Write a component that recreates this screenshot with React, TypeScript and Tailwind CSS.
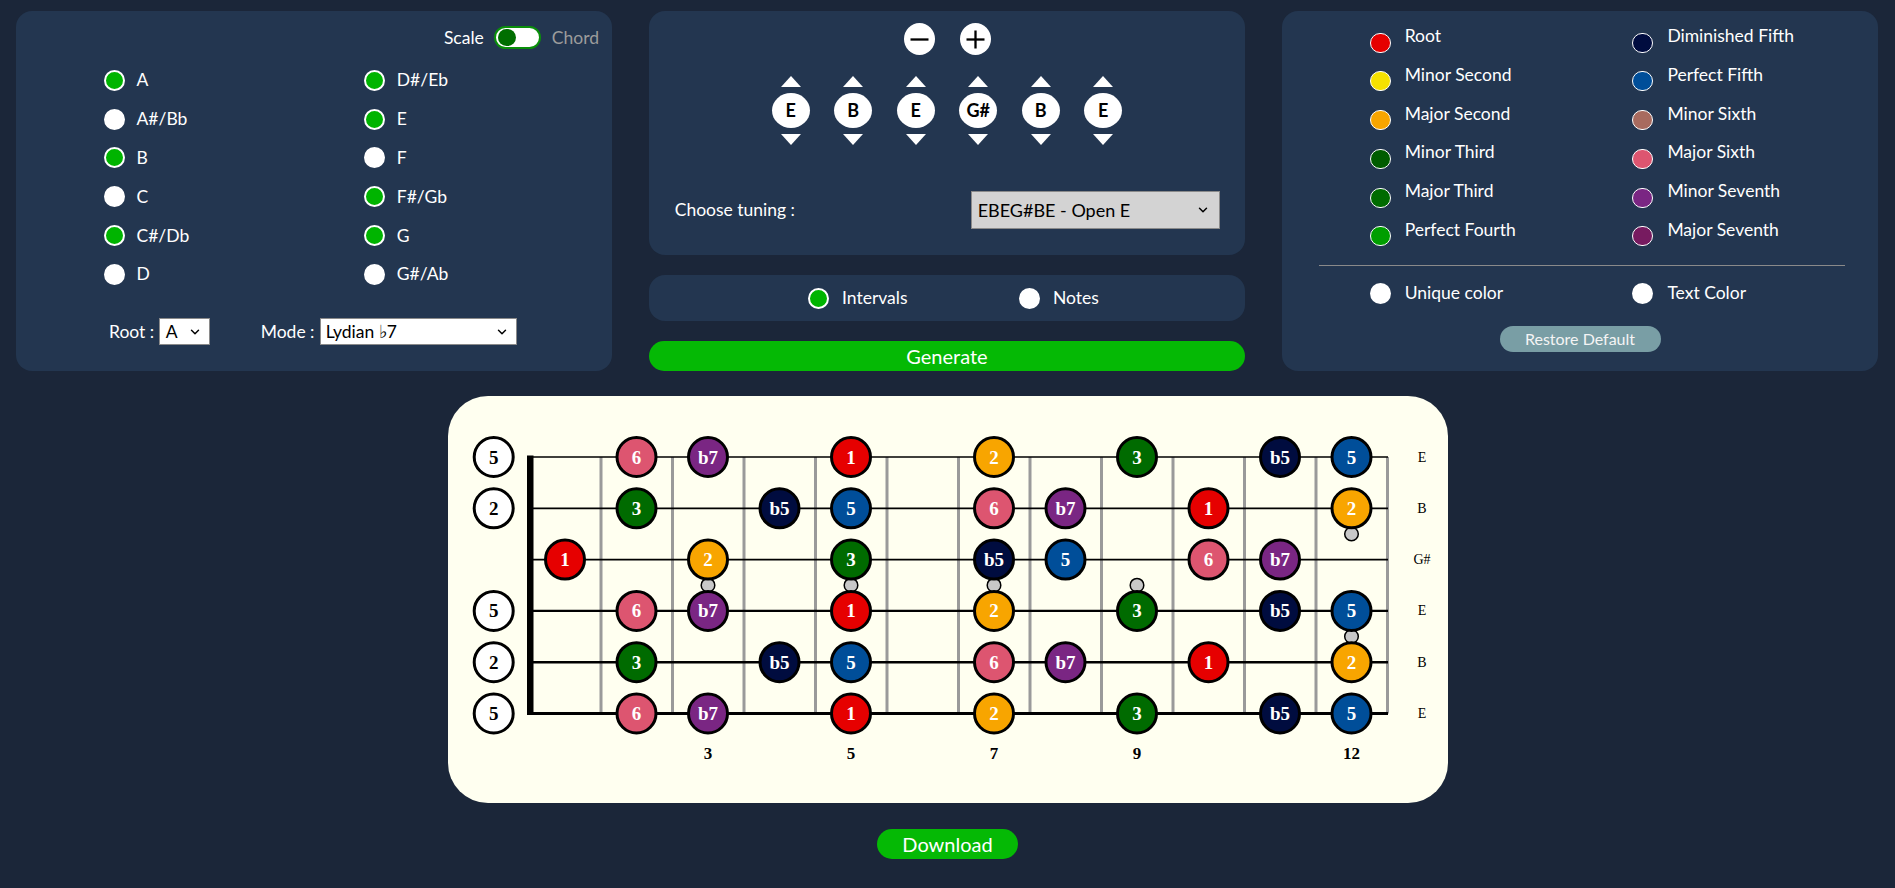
import { ChevronDown } from 'lucide-react';

const NOTE_COLORS: Record<string, string> = {
  '1': '#e60000',
  '2': '#f8a500',
  '3': '#006b00',
  b5: '#000c3f',
  '5': '#004e99',
  '6': '#dd5570',
  b7: '#7a2683',
};

const E_NOTES: Record<number, string> = { 2: '6', 3: 'b7', 5: '1', 7: '2', 9: '3', 11: 'b5', 12: '5' };
const B_NOTES: Record<number, string> = { 2: '3', 4: 'b5', 5: '5', 7: '6', 8: 'b7', 10: '1', 12: '2' };
const GS_NOTES: Record<number, string> = { 1: '1', 3: '2', 5: '3', 7: 'b5', 8: '5', 10: '6', 11: 'b7' };

const STRINGS = [
  { label: 'E', open: '5', notes: E_NOTES },
  { label: 'B', open: '2', notes: B_NOTES },
  { label: 'G#', open: null, notes: GS_NOTES },
  { label: 'E', open: '5', notes: E_NOTES },
  { label: 'B', open: '2', notes: B_NOTES },
  { label: 'E', open: '5', notes: E_NOTES },
];

const NOTE_NAMES_LEFT = [
  { name: 'A', on: true },
  { name: 'A#/Bb', on: false },
  { name: 'B', on: true },
  { name: 'C', on: false },
  { name: 'C#/Db', on: true },
  { name: 'D', on: false },
];
const NOTE_NAMES_RIGHT = [
  { name: 'D#/Eb', on: true },
  { name: 'E', on: true },
  { name: 'F', on: false },
  { name: 'F#/Gb', on: true },
  { name: 'G', on: true },
  { name: 'G#/Ab', on: false },
];

const LEGEND_LEFT = [
  { name: 'Root', color: '#e60000' },
  { name: 'Minor Second', color: '#f5e100' },
  { name: 'Major Second', color: '#f8a500' },
  { name: 'Minor Third', color: '#005c00' },
  { name: 'Major Third', color: '#006b00' },
  { name: 'Perfect Fourth', color: '#009e00' },
];
const LEGEND_RIGHT = [
  { name: 'Diminished Fifth', color: '#000c3f' },
  { name: 'Perfect Fifth', color: '#004e99' },
  { name: 'Minor Sixth', color: '#a86b5f' },
  { name: 'Major Sixth', color: '#dd5570' },
  { name: 'Minor Seventh', color: '#7a2683' },
  { name: 'Major Seventh', color: '#771b60' },
];

const TUNING = ['E', 'B', 'E', 'G#', 'B', 'E'];

const STRING_Y = [61, 112.3, 163.6, 214.9, 266.2, 317.5];
const STRING_W = [1.6, 1.7, 1.9, 2.2, 2.6, 2.9];
const FRET_X = Array.from({ length: 12 }, (_, i) => 153 + i * 71.5);
const noteX = (fret: number) => 117 + (fret - 1) * 71.5;

const Radio = ({ on }: { on: boolean }) => (
  <span
    className={`block h-[21px] w-[21px] shrink-0 rounded-full border-[2.5px] border-white ${
      on ? 'bg-[#00b400]' : 'bg-white'
    }`}
  />
);

const Triangle = ({ up }: { up: boolean }) => (
  <svg width="20" height="11" viewBox="0 0 20 11" className="block">
    <polygon points={up ? '10,0 20,11 0,11' : '0,0 20,0 10,11'} fill="#fff" />
  </svg>
);

const Fretboard = () => (
  <svg width="1000" height="407" viewBox="0 0 1000 407" className="block">
    {FRET_X.map((x) => (
      <line key={x} x1={x} x2={x} y1={61} y2={317.5} stroke="#9a9a9a" strokeWidth={3} />
    ))}
    {STRING_Y.map((y, i) => (
      <line key={y} x1={82} x2={940} y1={y} y2={y} stroke="#000" strokeWidth={STRING_W[i]} />
    ))}
    <rect x={79} y={59.5} width={6.5} height={259.5} fill="#000" />
    {/* fret markers */}
    {[3, 5, 7, 9].map((f) => (
      <circle key={f} cx={noteX(f)} cy={189.2} r={6.8} fill="#c8c8c8" stroke="#000" strokeWidth={1.5} />
    ))}
    <circle cx={noteX(12)} cy={138} r={6.8} fill="#c8c8c8" stroke="#000" strokeWidth={1.5} />
    <circle cx={noteX(12)} cy={240.5} r={6.8} fill="#c8c8c8" stroke="#000" strokeWidth={1.5} />
    {STRINGS.map((s, i) => (
      <g key={i}>
        {s.open && (
          <g>
            <circle cx={45.7} cy={STRING_Y[i]} r={19.5} fill="#fff" stroke="#000" strokeWidth={3} />
            <text
              x={45.7}
              y={STRING_Y[i] + 6.5}
              textAnchor="middle"
              fontFamily="'Liberation Serif', serif"
              fontWeight="bold"
              fontSize="19"
              fill="#000"
            >
              {s.open}
            </text>
          </g>
        )}
        {Object.entries(s.notes).map(([fret, iv]) => (
          <g key={fret}>
            <circle
              cx={noteX(Number(fret))}
              cy={STRING_Y[i]}
              r={19.5}
              fill={NOTE_COLORS[iv]}
              stroke="#000"
              strokeWidth={3}
            />
            <text
              x={noteX(Number(fret))}
              y={STRING_Y[i] + 6.5}
              textAnchor="middle"
              fontFamily="'Liberation Serif', serif"
              fontWeight="bold"
              fontSize="19"
              fill="#fff"
            >
              {iv}
            </text>
          </g>
        ))}
        <text
          x={974}
          y={STRING_Y[i] + 4.5}
          textAnchor="middle"
          fontFamily="'Liberation Serif', serif"
          fontSize="14"
          fill="#000"
        >
          {s.label}
        </text>
      </g>
    ))}
    {[3, 5, 7, 9, 12].map((f) => (
      <text
        key={f}
        x={noteX(f)}
        y={363}
        textAnchor="middle"
        fontFamily="'Liberation Serif', serif"
        fontWeight="bold"
        fontSize="17"
        fill="#000"
      >
        {f}
      </text>
    ))}
  </svg>
);

export default function App() {
  return (
    <div className="h-[888px] w-full overflow-hidden bg-[#1b2639] pt-[11px] font-['Lato','Open_Sans',sans-serif] text-[17.5px] text-white">
      <div className="grid grid-cols-[596px_596px_596px] items-start gap-[37px] pl-[16px]">
        {/* scale / chord picker */}
        <div className="h-[360px] rounded-[16px] bg-[#233650]">
          <div className="flex h-[38px] items-center justify-end pr-[13px] pt-[15px]">
            <span className="leading-[23px]">Scale</span>
            <span className="ml-[10px] flex h-[23px] w-[47px] items-center rounded-full border-2 border-[#0a8f0a] bg-white pl-[2px]">
              <span className="block h-[17px] w-[18px] rounded-full bg-[#006e00]" />
            </span>
            <span className="ml-[11px] leading-[23px] text-[#9c9c9c]">Chord</span>
          </div>
          <div className="mt-[12px] grid grid-cols-[260.3px_auto] pl-[87.5px]">
            {NOTE_NAMES_LEFT.map((n, i) => (
              <div key={n.name} className="contents">
                <div className="flex h-[38.8px] items-center gap-[12px]">
                  <Radio on={n.on} />
                  <span className="leading-[26px]">{n.name}</span>
                </div>
                <div className="flex h-[38.8px] items-center gap-[12px]">
                  <Radio on={NOTE_NAMES_RIGHT[i].on} />
                  <span className="leading-[26px]">{NOTE_NAMES_RIGHT[i].name}</span>
                </div>
              </div>
            ))}
          </div>
          <div className="mt-[24px] flex h-[28px] items-center pl-[93px]">
            <span className="w-[49.7px] shrink-0 whitespace-nowrap">Root :</span>
            <div className="flex h-[27px] w-[51px] shrink-0 items-center justify-between border border-[#8a8a8a] bg-white pl-[6px] pr-[7px] text-black">
              <span>A</span>
              <ChevronDown size={14} strokeWidth={2.5} />
            </div>
            <span className="ml-[51px] w-[59px] shrink-0 whitespace-nowrap">Mode :</span>
            <div className="flex h-[27px] w-[197px] shrink-0 items-center justify-between border border-[#8a8a8a] bg-white pl-[5px] pr-[7px] text-black">
              <span>Lydian ♭7</span>
              <ChevronDown size={14} strokeWidth={2.5} />
            </div>
          </div>
        </div>

        {/* tuning */}
        <div className="flex flex-col">
          <div className="h-[244px] rounded-[16px] bg-[#233650]">
            <div className="flex justify-center gap-[25px] pt-[12px]">
              <span className="flex h-[32px] w-[31px] items-center justify-center rounded-[50%] bg-white">
                <svg width="19" height="19" viewBox="0 0 19 19">
                  <line x1="0.5" x2="18.5" y1="9.5" y2="9.5" stroke="#000" strokeWidth="2.3" />
                </svg>
              </span>
              <span className="flex h-[32px] w-[31px] items-center justify-center rounded-[50%] bg-white">
                <svg width="19" height="19" viewBox="0 0 19 19">
                  <line x1="0.5" x2="18.5" y1="9.5" y2="9.5" stroke="#000" strokeWidth="2.3" />
                  <line x1="9.5" x2="9.5" y1="0.5" y2="18.5" stroke="#000" strokeWidth="2.3" />
                </svg>
              </span>
            </div>
            <div className="mt-[21px] flex justify-center gap-[25.1px]">
              {TUNING.map((t, i) => (
                <div key={i} className="flex w-[37.4px] flex-col items-center">
                  <Triangle up />
                  <span className="mt-[6px] flex h-[35px] w-[38px] items-center justify-center rounded-[50%] bg-white text-[18px] font-bold text-black">
                    {t}
                  </span>
                  <span className="mt-[6px] block">
                    <Triangle up={false} />
                  </span>
                </div>
              ))}
            </div>
            <div className="mt-[46px] flex items-center justify-between pl-[25.7px] pr-[25.3px]">
              <span>Choose tuning :</span>
              <div className="flex h-[38px] w-[249px] items-center justify-between border border-[#8a8a8a] bg-[#d3d3d3] pl-[6px] pr-[9px] text-[18px] text-black">
                <span>EBEG#BE - Open E</span>
                <ChevronDown size={14} strokeWidth={2.5} />
              </div>
            </div>
          </div>
          <div className="mt-[20px] flex h-[46px] items-center rounded-[16px] bg-[#233650] pl-[159px]">
            <Radio on />
            <span className="ml-[13px] w-[177px]">Intervals</span>
            <Radio on={false} />
            <span className="ml-[13px]">Notes</span>
          </div>
          <button className="mt-[20px] flex h-[30px] items-center justify-center rounded-full bg-[#05b905] text-[20px] text-white">
            Generate
          </button>
        </div>

        {/* colour legend */}
        <div className="h-[360px] rounded-[16px] bg-[#233650] pt-[12px]">
          <div className="grid grid-cols-[262.7px_auto] pl-[87.7px]">
            {LEGEND_LEFT.map((l, i) => (
              <div key={l.name} className="contents">
                <div className="flex h-[38.8px] items-start gap-[14px]">
                  <span
                    className="mt-[9.5px] block h-[20px] w-[21px] shrink-0 rounded-full border-[1.5px] border-white"
                    style={{ backgroundColor: l.color }}
                  />
                  <span className="leading-[26px]">{l.name}</span>
                </div>
                <div className="flex h-[38.8px] items-start gap-[14px]">
                  <span
                    className="mt-[9.5px] block h-[20px] w-[21px] shrink-0 rounded-full border-[1.5px] border-white"
                    style={{ backgroundColor: LEGEND_RIGHT[i].color }}
                  />
                  <span className="leading-[26px]">{LEGEND_RIGHT[i].name}</span>
                </div>
              </div>
            ))}
          </div>
          <div className="ml-[37.4px] mr-[33.3px] mt-[9.7px] h-px bg-[#8a8a8a]" />
          <div className="mt-[14px] grid grid-cols-[262.7px_auto] pl-[87.7px]">
            <div className="flex items-start gap-[14px]">
              <span className="mt-[3px] block h-[21px] w-[21px] shrink-0 rounded-full bg-white" />
              <span className="leading-[26px]">Unique color</span>
            </div>
            <div className="flex items-start gap-[14px]">
              <span className="mt-[3px] block h-[21px] w-[21px] shrink-0 rounded-full bg-white" />
              <span className="leading-[26px]">Text Color</span>
            </div>
          </div>
          <div className="mt-[19.5px] flex justify-center">
            <button className="flex h-[26px] w-[161px] items-center justify-center rounded-full bg-[#799ea5] text-[16px] text-[#f4f4f4]">
              Restore Default
            </button>
          </div>
        </div>
      </div>

      {/* fretboard */}
      <div className="mx-auto mt-[25px] h-[407px] w-[1000px] overflow-hidden rounded-[40px] bg-[#fffff0]">
        <Fretboard />
      </div>

      <div className="mt-[26px] flex justify-center">
        <button className="flex h-[30px] w-[141px] items-center justify-center rounded-full bg-[#05b905] text-[20px] text-white">
          Download
        </button>
      </div>
    </div>
  );
}
